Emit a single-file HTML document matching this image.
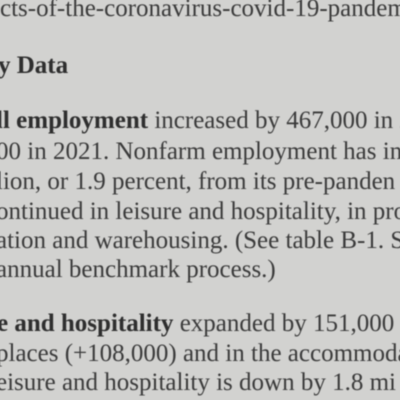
<!DOCTYPE html>
<html><head><style>
html,body{margin:0;padding:0}
body{width:400px;height:400px;overflow:hidden;background:#d2d2d0;position:relative;font-family:"Liberation Serif","Times New Roman",Times,"DejaVu Serif",serif;font-size:25px;color:#3a3a3a}
.l{position:absolute;white-space:nowrap;line-height:1;filter:blur(0.5px);font-family:"Liberation Serif","Times New Roman",Times,serif}
b{color:#2e2e2e}
</style></head><body>
<div class="l" style="left:0;top:-4px">cts-of-the-coronavirus-covid-19-pandem</div>
<div class="l" style="left:-2px;top:53px"><b>y Data</b></div>
<div class="l" style="left:-4px;top:108px"><b>ll employment</b> increased by 467,000 in 2</div>
<div class="l" style="left:-4px;top:139px">00 in 2021. Nonfarm employment has in</div>
<div class="l" style="left:-4px;top:169px">lion, or 1.9 percent, from its pre-panden</div>
<div class="l" style="left:-4px;top:199px">ontinued in leisure and hospitality, in pro</div>
<div class="l" style="left:-4px;top:228px">ation and warehousing. (See table B-1. S</div>
<div class="l" style="left:-4px;top:257px">annual benchmark process.)</div>
<div class="l" style="left:-3px;top:311px"><b>e and hospitality</b> expanded by 151,000</div>
<div class="l" style="left:-4px;top:341px">places (+108,000) and in the accommoda</div>
<div class="l" style="left:-4px;top:370px">eisure and hospitality is down by 1.8 mi</div>
</body></html>
